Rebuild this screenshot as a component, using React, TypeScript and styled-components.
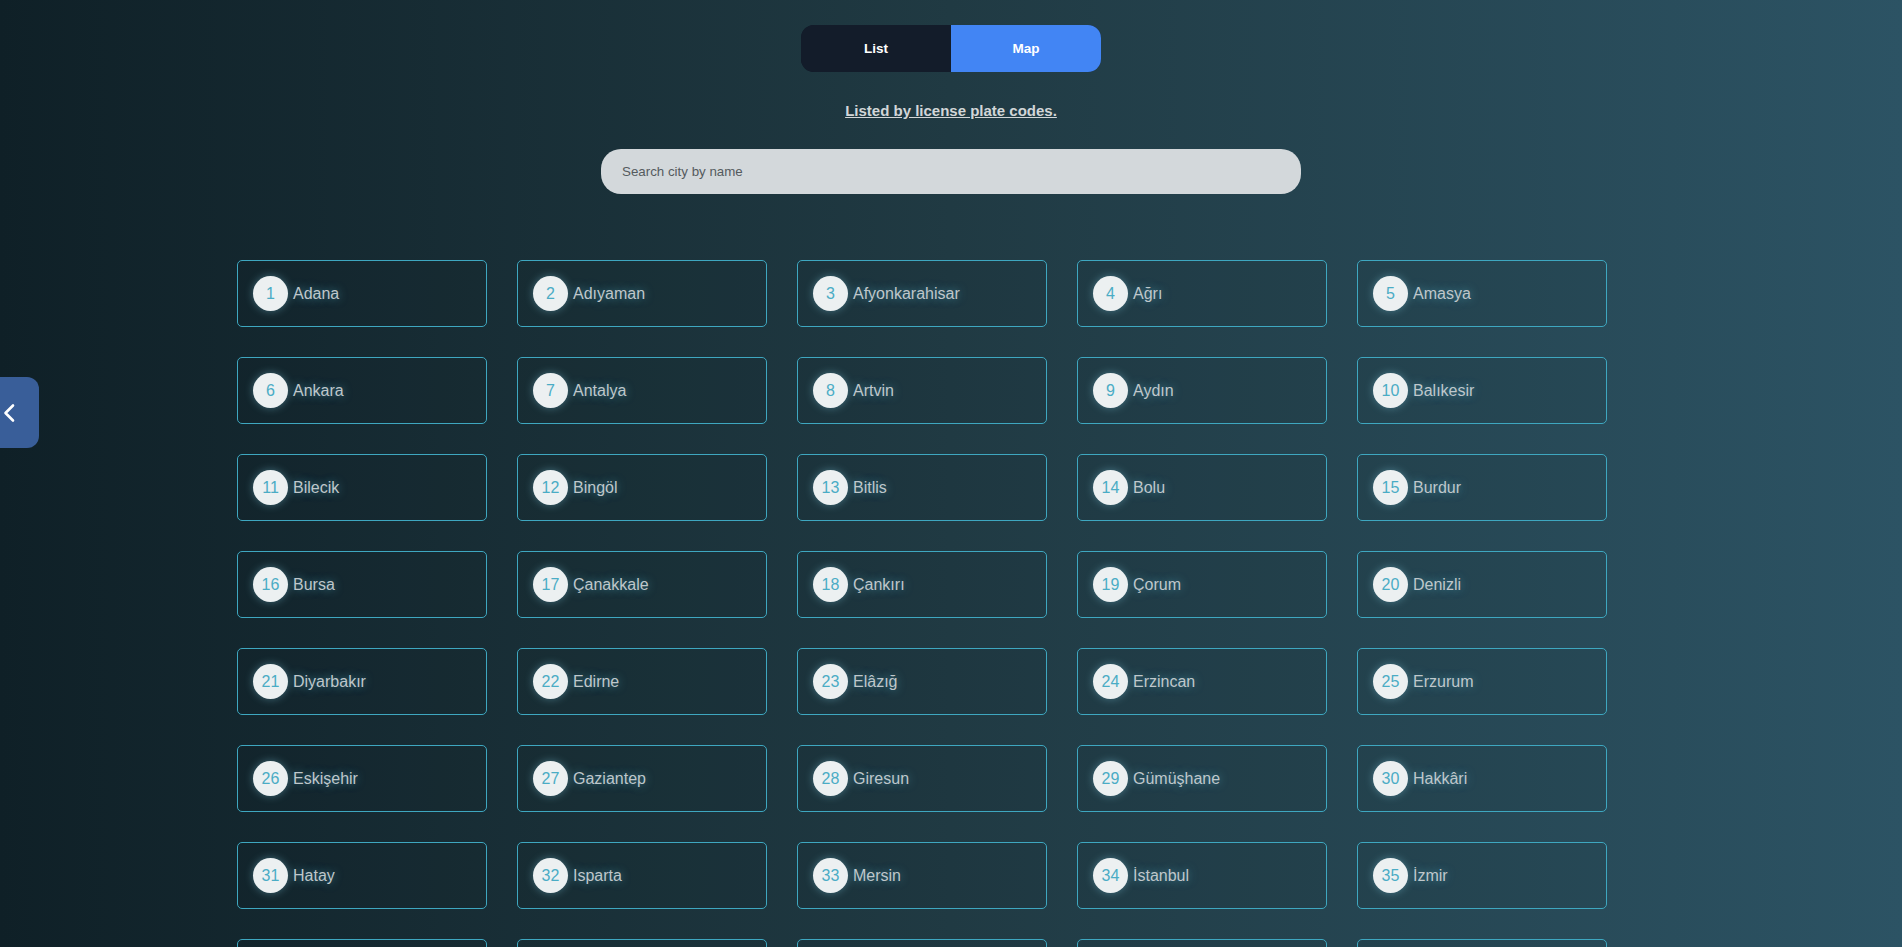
import React, { useState } from "react";
import styled, { createGlobalStyle } from "styled-components";

const cities = [
  "Adana", "Adıyaman", "Afyonkarahisar", "Ağrı", "Amasya", "Ankara", "Antalya", "Artvin", "Aydın", "Balıkesir",
  "Bilecik", "Bingöl", "Bitlis", "Bolu", "Burdur", "Bursa", "Çanakkale", "Çankırı", "Çorum", "Denizli",
  "Diyarbakır", "Edirne", "Elâzığ", "Erzincan", "Erzurum", "Eskişehir", "Gaziantep", "Giresun", "Gümüşhane", "Hakkâri",
  "Hatay", "Isparta", "Mersin", "İstanbul", "İzmir", "Kars", "Kastamonu", "Kayseri", "Kırklareli", "Kırşehir",
  "Kocaeli", "Konya", "Kütahya", "Malatya", "Manisa", "Kahramanmaraş", "Mardin", "Muğla", "Muş", "Nevşehir",
  "Niğde", "Ordu", "Rize", "Sakarya", "Samsun", "Siirt", "Sinop", "Sivas", "Tekirdağ", "Tokat",
  "Trabzon", "Tunceli", "Şanlıurfa", "Uşak", "Van", "Yozgat", "Zonguldak", "Aksaray", "Bayburt", "Karaman",
  "Kırıkkale", "Batman", "Şırnak", "Bartın", "Ardahan", "Iğdır", "Yalova", "Karabük", "Kilis", "Osmaniye", "Düzce",
];

const GlobalStyle = createGlobalStyle`
  html, body { margin: 0; padding: 0; }
  body {
    font-family: "Liberation Sans", Arial, sans-serif;
    background: linear-gradient(to right, #0f2027, #203a43, #2c5364);
    background-attachment: fixed;
    min-height: 100vh;
  }
  * { box-sizing: border-box; }
`;

const Page = styled.div`
  min-height: 100vh;
  padding-top: 25px;
  padding-bottom: 60px;
  display: flex;
  flex-direction: column;
  align-items: center;
`;

const Toggle = styled.div`
  display: flex;
  width: 300px;
  height: 47px;
  border-radius: 13px;
  overflow: hidden;
  background: #131c2a;
`;

const ToggleButton = styled.button<{ $active: boolean }>`
  flex: 1;
  border: none;
  margin: 0;
  cursor: pointer;
  font-family: "Liberation Sans", Arial, sans-serif;
  font-weight: 700;
  font-size: 13.5px;
  color: #ffffff;
  background: ${(p) => (p.$active ? "#4285f4" : "#131c2a")};
`;

const Subtitle = styled.a`
  margin-top: 30px;
  font-size: 15px;
  line-height: 17px;
  font-weight: 700;
  color: #d2d6d8;
  text-decoration: underline;
  cursor: pointer;
`;

const Search = styled.input`
  margin-top: 30px;
  width: 700px;
  height: 45px;
  border: none;
  outline: none;
  border-radius: 20px;
  background: #d3d8db;
  padding: 0 21px;
  font-family: "Liberation Sans", Arial, sans-serif;
  font-size: 13.33px;
  color: #333;
  &::placeholder { color: #555b5e; }
`;

const Grid = styled.div`
  margin-top: 66px;
  width: 1428px;
  display: grid;
  grid-template-columns: repeat(auto-fill, 250px);
  column-gap: 30px;
  row-gap: 30px;
`;

const Card = styled.div`
  height: 67px;
  border: 1px solid #3ea7c0;
  border-radius: 5px;
  background: rgba(0, 0, 0, 0.04);
  display: flex;
  align-items: center;
  padding-left: 15px;
  gap: 5px;
  cursor: pointer;
`;

const Code = styled.span`
  width: 35px;
  height: 35px;
  border-radius: 50%;
  background: #ecf0f1;
  box-shadow: 0 0 8px rgba(120, 190, 210, 0.45);
  color: #4aacc5;
  font-size: 16px;
  display: flex;
  align-items: center;
  justify-content: center;
  flex-shrink: 0;
`;

const Name = styled.span`
  font-size: 16px;
  color: #bfc7cb;
  text-shadow: 0 0 9px rgba(90, 190, 220, 0.6);
`;

const SideTab = styled.button`
  position: fixed;
  left: 0;
  top: 377px;
  width: 39px;
  height: 71px;
  border: none;
  border-radius: 0 12px 12px 0;
  background: #395e99;
  padding: 0 0 0 3px;
  display: flex;
  align-items: center;
  cursor: pointer;
`;

export default function App() {
  const [mode, setMode] = useState<"list" | "map">("map");
  const [query, setQuery] = useState("");
  const shown = cities
    .map((name, i) => ({ name, code: i + 1 }))
    .filter((c) => c.name.toLocaleLowerCase("tr").includes(query.toLocaleLowerCase("tr")));
  return (
    <>
      <GlobalStyle />
      <SideTab aria-label="Open sidebar">
        <svg width="14" height="20" viewBox="0 0 14 20" fill="none">
          <polyline points="10,2.5 2.5,10 10,17.5" stroke="#ffffff" strokeWidth="2.6" strokeLinecap="round" strokeLinejoin="round" />
        </svg>
      </SideTab>
      <Page>
        <Toggle>
          <ToggleButton $active={false} onClick={() => setMode("list")}>List</ToggleButton>
          <ToggleButton $active={mode === "map"} onClick={() => setMode("map")}>Map</ToggleButton>
        </Toggle>
        <Subtitle>Listed by license plate codes.</Subtitle>
        <Search placeholder="Search city by name" value={query} onChange={(e) => setQuery(e.target.value)} />
        <Grid>
          {shown.map((c) => (
            <Card key={c.code}>
              <Code>{c.code}</Code>
              <Name>{c.name}</Name>
            </Card>
          ))}
        </Grid>
      </Page>
    </>
  );
}
